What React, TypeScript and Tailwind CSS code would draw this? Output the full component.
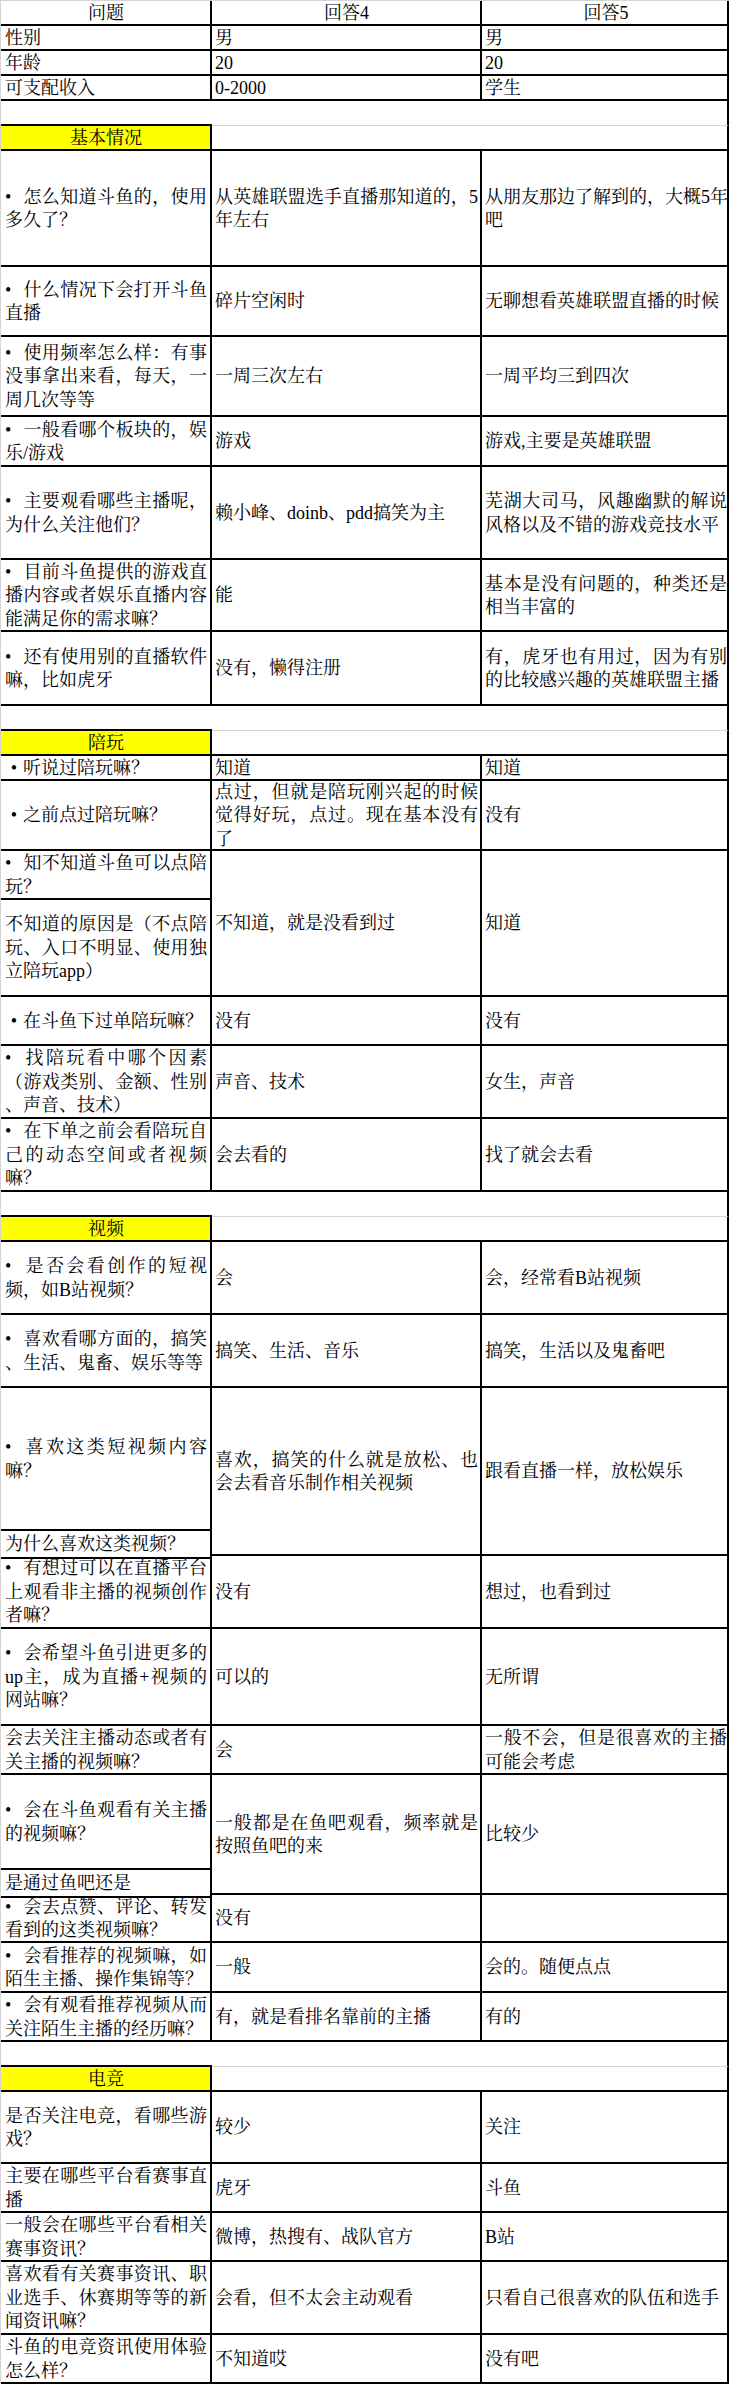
import React from "react";

type Lines = string[];
type Row =
  | { t: "n"; h: string; c: [Lines, Lines, Lines]; center?: boolean }
  | { t: "split"; h: string; h1: string; a: Lines; b: Lines; c2: Lines; c3: Lines }
  | { t: "blank" }
  | { t: "sec"; label: string };

const rows: Row[] = [
  { t: "n", h: "h-[25px]", c: [["问题"], ["回答4"], ["回答5"]], center: true },
  { t: "n", h: "h-[25px]", c: [["性别"], ["男"], ["男"]] },
  { t: "n", h: "h-[25px]", c: [["年龄"], ["20"], ["20"]] },
  { t: "n", h: "h-[25px]", c: [["可支配收入"], ["0-2000"], ["学生"]] },
  { t: "blank" },
  { t: "sec", label: "基本情况" },
  {
    t: "n",
    h: "h-[116px]",
    c: [
      ["• 怎么知道斗鱼的，使用", "多久了？"],
      ["从英雄联盟选手直播那知道的，5", "年左右"],
      ["从朋友那边了解到的，大概5年", "吧"],
    ],
  },
  { t: "n", h: "h-[70px]", c: [["• 什么情况下会打开斗鱼", "直播"], ["碎片空闲时"], ["无聊想看英雄联盟直播的时候"]] },
  {
    t: "n",
    h: "h-[80px]",
    c: [["• 使用频率怎么样：有事", "没事拿出来看，每天，一", "周几次等等"], ["一周三次左右"], ["一周平均三到四次"]],
  },
  { t: "n", h: "h-[50px]", c: [["• 一般看哪个板块的，娱", "乐/游戏"], ["游戏"], ["游戏,主要是英雄联盟"]] },
  {
    t: "n",
    h: "h-[93px]",
    c: [
      ["• 主要观看哪些主播呢，", "为什么关注他们？"],
      ["赖小峰、doinb、pdd搞笑为主"],
      ["芜湖大司马，风趣幽默的解说", "风格以及不错的游戏竞技水平"],
    ],
  },
  {
    t: "n",
    h: "h-[72px]",
    c: [
      ["• 目前斗鱼提供的游戏直", "播内容或者娱乐直播内容", "能满足你的需求嘛？"],
      ["能"],
      ["基本是没有问题的，种类还是", "相当丰富的"],
    ],
  },
  {
    t: "n",
    h: "h-[74px]",
    c: [
      ["• 还有使用别的直播软件", "嘛，比如虎牙"],
      ["没有，懒得注册"],
      ["有，虎牙也有用过，因为有别", "的比较感兴趣的英雄联盟主播"],
    ],
  },
  { t: "blank" },
  { t: "sec", label: "陪玩" },
  { t: "n", h: "h-[25px]", c: [["• 听说过陪玩嘛？"], ["知道"], ["知道"]] },
  {
    t: "n",
    h: "h-[70px]",
    c: [["• 之前点过陪玩嘛？"], ["点过，但就是陪玩刚兴起的时候", "觉得好玩，点过。现在基本没有", "了"], ["没有"]],
  },
  {
    t: "split",
    h: "h-[146px]",
    h1: "h-[49px]",
    a: ["• 知不知道斗鱼可以点陪", "玩？"],
    b: ["不知道的原因是（不点陪", "玩、入口不明显、使用独", "立陪玩app）"],
    c2: ["不知道，就是没看到过"],
    c3: ["知道"],
  },
  { t: "n", h: "h-[49px]", c: [["• 在斗鱼下过单陪玩嘛？"], ["没有"], ["没有"]] },
  {
    t: "n",
    h: "h-[73px]",
    c: [["• 找陪玩看中哪个因素", "（游戏类别、金额、性别", "、声音、技术）"], ["声音、技术"], ["女生，声音"]],
  },
  {
    t: "n",
    h: "h-[73px]",
    c: [["• 在下单之前会看陪玩自", "己的动态空间或者视频", "嘛？"], ["会去看的"], ["找了就会去看"]],
  },
  { t: "blank" },
  { t: "sec", label: "视频" },
  { t: "n", h: "h-[73px]", c: [["• 是否会看创作的短视", "频，如B站视频？"], ["会"], ["会，经常看B站视频"]] },
  {
    t: "n",
    h: "h-[73px]",
    c: [["• 喜欢看哪方面的，搞笑", "、生活、鬼畜、娱乐等等"], ["搞笑、生活、音乐"], ["搞笑，生活以及鬼畜吧"]],
  },
  {
    t: "split",
    h: "h-[168px]",
    h1: "h-[143px]",
    a: ["• 喜欢这类短视频内容", "嘛？"],
    b: ["为什么喜欢这类视频？"],
    c2: ["喜欢，搞笑的什么就是放松、也", "会去看音乐制作相关视频"],
    c3: ["跟看直播一样，放松娱乐"],
  },
  {
    t: "n",
    h: "h-[73px]",
    c: [["• 有想过可以在直播平台", "上观看非主播的视频创作", "者嘛？"], ["没有"], ["想过，也看到过"]],
  },
  {
    t: "n",
    h: "h-[97px]",
    c: [["• 会希望斗鱼引进更多的", "up主，成为直播+视频的", "网站嘛？"], ["可以的"], ["无所谓"]],
  },
  {
    t: "n",
    h: "h-[49px]",
    c: [["会去关注主播动态或者有", "关主播的视频嘛？"], ["会"], ["一般不会，但是很喜欢的主播", "可能会考虑"]],
  },
  {
    t: "split",
    h: "h-[120px]",
    h1: "h-[95px]",
    a: ["• 会在斗鱼观看有关主播", "的视频嘛？"],
    b: ["是通过鱼吧还是"],
    c2: ["一般都是在鱼吧观看，频率就是", "按照鱼吧的来"],
    c3: ["比较少"],
  },
  { t: "n", h: "h-[48px]", c: [["• 会去点赞、评论、转发", "看到的这类视频嘛？"], ["没有"], []] },
  { t: "n", h: "h-[50px]", c: [["• 会看推荐的视频嘛，如", "陌生主播、操作集锦等？"], ["一般"], ["会的。随便点点"]] },
  {
    t: "n",
    h: "h-[49px]",
    c: [["• 会有观看推荐视频从而", "关注陌生主播的经历嘛？"], ["有，就是看排名靠前的主播"], ["有的"]],
  },
  { t: "blank" },
  { t: "sec", label: "电竞" },
  { t: "n", h: "h-[72px]", c: [["是否关注电竞，看哪些游", "戏？"], ["较少"], ["关注"]] },
  { t: "n", h: "h-[49px]", c: [["主要在哪些平台看赛事直", "播"], ["虎牙"], ["斗鱼"]] },
  { t: "n", h: "h-[49px]", c: [["一般会在哪些平台看相关", "赛事资讯？"], ["微博，热搜有、战队官方"], ["B站"]] },
  {
    t: "n",
    h: "h-[73px]",
    c: [["喜欢看有关赛事资讯、职", "业选手、休赛期等等的新", "闻资讯嘛？"], ["会看，但不太会主动观看"], ["只看自己很喜欢的队伍和选手"]],
  },
  { t: "n", h: "h-[49px]", c: [["斗鱼的电竞资讯使用体验", "怎么样？"], ["不知道哎"], ["没有吧"]] },
];

function renderLine(l: string) {
  if (l.startsWith("• ")) {
    return (
      <>
        <span className="inline-block w-[18px] text-center">•</span>
        {l.slice(2)}
      </>
    );
  }
  return l;
}

function Text({ lines, center }: { lines: Lines; center?: boolean }) {
  return (
    <>
      {lines.map((l, i) => (
        <div
          key={i}
          className={
            "whitespace-nowrap " +
            (center ? "text-center" : i < lines.length - 1 ? "[text-align-last:justify]" : "")
          }
        >
          {renderLine(l)}
        </div>
      ))}
    </>
  );
}

const cellBase = "flex flex-col justify-center border-r-2 border-b-2 border-black pt-[2px]";
const col1 = "w-[211px] shrink-0 pl-[4px] pr-[3px]";
const col2 = "w-[270px] shrink-0 pl-[3px] pr-[2px]";
const col3 = "w-[247px] shrink-0 pl-[3px] pr-0";

function RowView({ r }: { r: Row }) {
  if (r.t === "blank") {
    return (
      <div className="flex h-[25px]">
        <div className="w-[211px] shrink-0 border-b-2 border-black" />
        <div className="w-[517px] shrink-0 border-b border-b-[#d4d4d4] border-r-2 border-r-black" />
      </div>
    );
  }
  if (r.t === "sec") {
    return (
      <div className="flex h-[25px]">
        <div className={`${cellBase} ${col1} bg-[#ffff00] text-center`}>{r.label}</div>
        <div className={`${cellBase} w-[517px] shrink-0`} />
      </div>
    );
  }
  if (r.t === "split") {
    return (
      <div className={`flex ${r.h}`}>
        <div className="flex w-[211px] shrink-0 flex-col">
          <div className={`${cellBase} pl-[4px] pr-[3px] ${r.h1} shrink-0`}>
            <Text lines={r.a} />
          </div>
          <div className={`${cellBase} pl-[4px] pr-[3px] flex-1`}>
            <Text lines={r.b} />
          </div>
        </div>
        <div className={`${cellBase} ${col2}`}>
          <Text lines={r.c2} />
        </div>
        <div className={`${cellBase} ${col3}`}>
          <Text lines={r.c3} />
        </div>
      </div>
    );
  }
  return (
    <div className={`flex ${r.h}`}>
      <div className={`${cellBase} ${col1}`}>
        <Text lines={r.c[0]} center={r.center} />
      </div>
      <div className={`${cellBase} ${col2}`}>
        <Text lines={r.c[1]} center={r.center} />
      </div>
      <div className={`${cellBase} ${col3}`}>
        <Text lines={r.c[2]} center={r.center} />
      </div>
    </div>
  );
}

export default function App() {
  return (
    <div className="min-h-[2385px] w-[734px] bg-white text-black text-[18px] leading-[23.5px] [font-family:'Liberation_Serif','Noto_Serif_CJK_SC','Noto_Sans_CJK_SC',serif]">
      <div className="w-[729px] border-l border-t border-[#d4d4d4]">
        {rows.map((r, i) => (
          <RowView key={i} r={r} />
        ))}
      </div>
    </div>
  );
}
